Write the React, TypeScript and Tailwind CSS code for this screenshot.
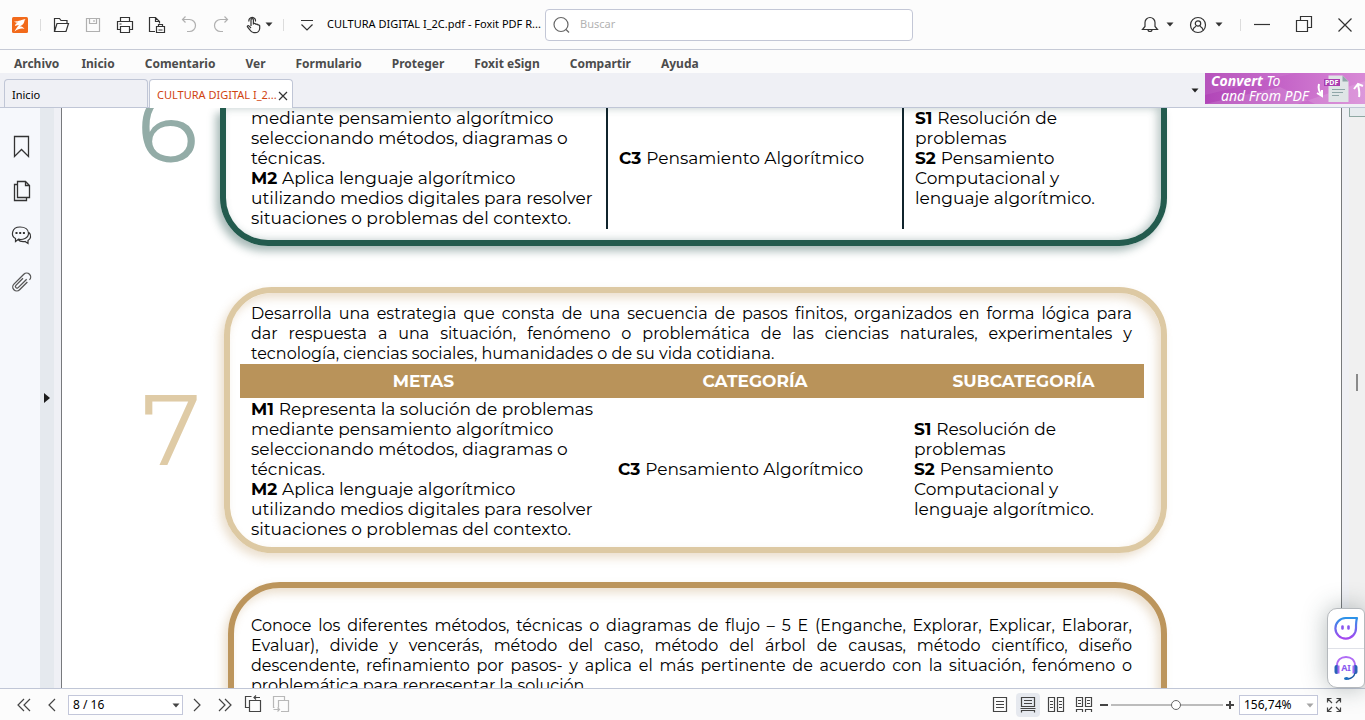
import type { ReactNode } from 'react';

const menus = ['Inicio', 'Comentario', 'Ver', 'Formulario', 'Proteger', 'Foxit eSign', 'Compartir', 'Ayuda'];

const metas = [
  { code: 'M1', text: 'Representa la solución de problemas' },
  { text: 'mediante pensamiento algorítmico' },
  { text: 'seleccionando métodos, diagramas o' },
  { text: 'técnicas.' },
  { code: 'M2', text: 'Aplica lenguaje algorítmico' },
  { text: 'utilizando medios digitales para resolver' },
  { text: 'situaciones o problemas del contexto.' },
];

const categorias = [{ code: 'C3', text: 'Pensamiento Algorítmico' }];

const subcategorias = [
  { code: 'S1', text: 'Resolución de' },
  { text: 'problemas' },
  { code: 'S2', text: 'Pensamiento' },
  { text: 'Computacional y' },
  { text: 'lenguaje algorítmico.' },
];

type Line = { code?: string; text: string };

function Icon({ size = 20, children, className = '' }: { size?: number; children: ReactNode; className?: string }) {
  return (
    <svg
      width={size}
      height={size}
      viewBox={`0 0 ${size} ${size}`}
      fill="none"
      stroke="currentColor"
      strokeWidth="1.2"
      className={`shrink-0 ${className}`}
      aria-hidden="true"
    >
      {children}
    </svg>
  );
}

function ToolButton({ label, className = 'w-8', children }: { label: string; className?: string; children: ReactNode }) {
  return (
    <button type="button" aria-label={label} className={`flex h-8 shrink-0 items-center justify-center ${className}`}>
      {children}
    </button>
  );
}

function Caret({ className = '' }: { className?: string }) {
  return (
    <svg width="8" height="5" viewBox="0 0 8 5" className={`shrink-0 ${className}`} aria-hidden="true">
      <path d="M0.5 0.5h7L4 4.5z" fill="currentColor" />
    </svg>
  );
}

function TitleBar() {
  return (
    <header className="flex h-[50px] shrink-0 items-center border-b border-[#c6cad6] bg-[#fcfcfc] text-[#333]">
      <svg width="16" height="16" viewBox="0 0 16 16" className="ml-3 shrink-0" aria-hidden="true">
        <rect width="16" height="16" rx="1.5" fill="#f26a1b" />
        <path d="M2 4.500c3 .2 5-.8 11.500-2.500C12 4 12.500 5 11.500 6.500 10.500 8 9 8.500 8 9.500c2 0 3 .5 4.500 2.500C9 11 7 11.500 2.500 14.500 4 11.500 5.500 9.500 7 8 5 8.500 4 8.500 3 9c0-1.500 1-2.500 3-3.200C4.500 5.800 3 5.500 2 4.500z" fill="#fff" />
      </svg>
      <span className="mr-1 ml-3 h-3 w-px bg-[#dcdcdc]" />
      <ToolButton label="Abrir">
        <Icon>
          <path d="M3.500 16.500V3.500h5l1.500 2h6v3M3.500 16.500h11.500l2.500-8H6z" />
        </Icon>
      </ToolButton>
      <ToolButton label="Guardar" className="w-8 text-[#b0b0b0]">
        <Icon>
          <path d="M3.500 3.500h13v13h-13zM6.500 3.500v5h7v-5M11 5v2" />
        </Icon>
      </ToolButton>
      <ToolButton label="Imprimir">
        <Icon>
          <path d="M5.500 6.500v-4h9v4M5.500 14.500h-3v-8h15v8h-3M5.500 11.500h9v6h-9zM4.500 9h2" />
        </Icon>
      </ToolButton>
      <ToolButton label="Vista previa">
        <Icon>
          <path d="M8 16.500H2.500v-14h6l4 4v2M8.500 2.500v4h4M11.500 11.500v-2h4v2M9.500 11.500h8v6h-8zM11.500 15h4" />
        </Icon>
      </ToolButton>
      <ToolButton label="Deshacer" className="w-8 text-[#b0b0b0]">
        <Icon>
          <path d="M3.500 4.500h7a6 6 0 0 1 0 12H8M6.500 1.500l-3 3 3 3" />
        </Icon>
      </ToolButton>
      <ToolButton label="Rehacer" className="w-8 text-[#b0b0b0]">
        <Icon>
          <path d="M16.500 4.500h-7a6 6 0 0 0 0 12H12M13.500 1.500l3 3-3 3" />
        </Icon>
      </ToolButton>
      <ToolButton label="Herramienta mano" className="w-8">
        <Icon>
          <path d="M8 11V4.800a1.200 1.200 0 0 1 2.400 0V9.500M10.400 9a1.200 1.200 0 0 1 2.200 0M12.600 9.800a1.200 1.200 0 0 1 2.200 0M14.800 10.500a1 1 0 0 1 1.900.5v2.500a4.500 4.500 0 0 1-4.500 4.200h-1.500c-2 0-2.700-1-3.700-2.700L4.500 12c-.6-1.200.9-1.900 1.700-.9L8 13M6 6.500a3.300 3.300 0 1 1 6.400 0" />
        </Icon>
      </ToolButton>
      <button type="button" aria-label="Más herramientas" className="-ml-1 flex h-8 w-2 items-center">
        <Caret />
      </button>
      <span className="mr-[7px] ml-[10px] h-3 w-px bg-[#dcdcdc]" />
      <ToolButton label="Personalizar barra">
        <Icon>
          <path d="M4 5.500h12M4.500 9.500l5.500 5.500 5.500-5.500" />
        </Icon>
      </ToolButton>
      <h1 className="w-[222px] shrink-0 pl-1 text-[11px] whitespace-nowrap text-black">CULTURA DIGITAL I_2C.pdf - Foxit PDF R...</h1>
      <label className="flex h-8 w-[368px] items-center rounded border border-[#c3c7d6] bg-white px-[5px]">
        <Icon className="text-[#666]">
          <circle cx="10" cy="9.500" r="7" />
          <path d="M15 14.500l3 3" />
        </Icon>
        <input
          type="search"
          aria-label="Buscar"
          placeholder="Buscar"
          className="ml-[9px] min-w-0 flex-1 bg-transparent text-[11px] outline-none placeholder:text-[#b3b3b3]"
        />
      </label>
      <div className="ml-auto flex items-center">
        <ToolButton label="Notificaciones">
          <Icon>
            <path d="M2.500 14.500h15l-2.500-3V7.500a5 5 0 0 0-10 0v4zM8 14.500a2 2 0 0 0 4 0" />
          </Icon>
        </ToolButton>
        <Caret className="mr-2" />
        <ToolButton label="Cuenta">
          <Icon>
            <circle cx="10" cy="10" r="7.500" />
            <circle cx="10" cy="8.500" r="2.700" />
            <path d="M4.800 15.200c.5-2 1.700-3.200 3.200-4M15.200 15.200c-.5-2-1.700-3.200-3.200-4" />
          </Icon>
        </ToolButton>
        <Caret className="mr-[17px] ml-px" />
        <span className="h-3 w-px bg-[#dcdcdc]" />
        <ToolButton label="Minimizar" className="w-[42px]">
          <Icon>
            <path d="M2 9.500h16" />
          </Icon>
        </ToolButton>
        <ToolButton label="Restaurar" className="w-[42px]">
          <Icon>
            <path d="M2.500 5.500h11v11h-11zM6.500 5.500v-4h11v11h-4" />
          </Icon>
        </ToolButton>
        <ToolButton label="Cerrar" className="w-10">
          <Icon>
            <path d="M3.500 3.500l13 13M16.500 3.500l-13 13" />
          </Icon>
        </ToolButton>
      </div>
    </header>
  );
}

function Banner() {
  return (
    <a
      href="#convert"
      className="relative block h-[31px] w-40 bg-linear-to-r from-[#b146b8] via-[#c565c8] to-[#d88ad6] text-[14px] leading-[15px] text-white italic"
    >
      <svg viewBox="0 0 160 31" className="absolute inset-0 h-full w-full" aria-hidden="true">
        <path d="M0 31L75 14 110 31zM160 8L92 31H160z" fill="#fff" opacity=".12" />
        <path d="M0 0h90L0 22z" fill="#fff" opacity=".07" />
        <path d="M123.500 2.500h14l6 6V29h-20z" fill="#dfe5e6" />
        <path d="M137.500 2.500l6 6h-6z" fill="#8fa6a8" />
        <path d="M127 16.500h13M127 19.500h11M127 22.500h7" stroke="#8fa6a8" />
        <rect x="119" y="6" width="16" height="7" fill="#a93cb0" />
        <path d="M114 11c-1 4 0 8 3 11M112 20l5 3 0-6" stroke="#fff" strokeWidth="2" fill="none" />
        <path d="M154 24c1-4 0-8-1-12M149 16l4-5 5 2" stroke="#fff" strokeWidth="2" fill="none" />
      </svg>
      <span className="relative block pl-[6px]">
        <b>Convert</b> To
      </span>
      <span className="relative block pl-4">and From PDF</span>
      <span className="absolute top-[5px] left-[120px] text-[7px] leading-[9px] font-bold not-italic">PDF</span>
    </a>
  );
}

function TabBar() {
  return (
    <div className="flex h-[35px] shrink-0 items-end border-b border-[#c0c6d6] bg-[#eff0f5] pl-1 text-[11px]">
      <button type="button" className="h-7 w-36 rounded-t border border-b-0 border-[#c0c6d6] pt-1 pl-[7px] text-left text-black">
        Inicio
      </button>
      <div className="relative -mb-px ml-px flex h-[29px] w-36 items-center justify-between rounded-t border border-b-0 border-[#c0c6d6] bg-white pt-[3px] pr-1 pl-[7px] text-[#d04410]">
        <button type="button" className="whitespace-nowrap">CULTURA DIGITAL I_2...</button>
        <button type="button" aria-label="Cerrar pestaña" className="text-[#333]">
          <Icon size={10}>
            <path d="M1 1l8 8M9 1L1 9" />
          </Icon>
        </button>
      </div>
      <div className="ml-auto flex items-center self-start">
        <button type="button" aria-label="Lista de pestañas" className="mr-[6px] pt-1 text-[#222]">
          <Caret />
        </button>
        <Banner />
      </div>
    </div>
  );
}

function SideBar() {
  return (
    <nav className="flex w-10 shrink-0 flex-col items-center bg-[#f6f8fc] pt-[17px] pl-px text-[#333]">
      <button type="button" aria-label="Marcadores" className="flex h-11 items-center">
        <Icon size={24}>
          <path d="M5.500 1.500h14v20l-7-7-7 7z" strokeWidth="1.3" />
        </Icon>
      </button>
      <button type="button" aria-label="Páginas" className="flex h-11 items-center">
        <Icon size={24}>
          <path d="M8.500 2.500h8l4 4v12h-12zM16.500 2.500v4h4M8.500 5.500h-3v16h12v-3" strokeWidth="1.3" />
        </Icon>
      </button>
      <button type="button" aria-label="Comentarios" className="flex h-11 items-center">
        <Icon size={24}>
          <path d="M6.500 15.500C1.500 13 2.500 4 11 4c5 0 8.500 2.500 8.500 6.200 0 5-6 7-10 6l-3 2.300zM20 9.500c3 3 1.500 6.500-1 8v3l-3-2c-3 .5-5.500-.2-7-2" />
          <path d="M6.500 10h2M10.200 10h2M13.900 10h2" strokeWidth="2" />
        </Icon>
      </button>
      <button type="button" aria-label="Archivos adjuntos" className="mt-[3px] flex h-11 items-center text-[#555]">
        <Icon size={24}>
          <path
            d="M16.500 7.500v11a4 4 0 0 1-8 0V4.500a4 4 0 0 1 8 0M8.500 10V4.500M14 6v12a1.600 1.600 0 0 1-3.200 0V8"
            strokeWidth="1.3"
            transform="rotate(45 12 12)"
          />
        </Icon>
      </button>
    </nav>
  );
}

function Lines({ lines }: { lines: Line[] }) {
  return (
    <>
      {lines.map((line) => (
        <div key={line.text} className="whitespace-nowrap">
          {line.code && <b>{line.code} </b>}
          {line.text}
        </div>
      ))}
    </>
  );
}

function GoalsTable({ header = false, ruled = false }: { header?: boolean; ruled?: boolean }) {
  const rule = ruled ? 'border-l-2 border-[#10242c]' : '';
  return (
    <table className="w-full table-fixed border-collapse text-[17px]">
      <colgroup>
        <col />
        <col className="w-[296px]" />
        <col className="w-[241px]" />
      </colgroup>
      {header && (
        <thead>
          <tr className="h-[34px] bg-[#b9935a] text-white">
            <th className="font-bold">METAS</th>
            <th className="font-bold">CATEGORÍA</th>
            <th className="font-bold">SUBCATEGORÍA</th>
          </tr>
        </thead>
      )}
      <tbody>
        <tr className="h-[142px]">
          <td className="px-[11px]">
            <Lines lines={metas} />
          </td>
          <td className={`px-[11px] ${rule}`}>
            <Lines lines={categorias} />
          </td>
          <td className={`px-[11px] ${rule}`}>
            <Lines lines={subcategorias} />
          </td>
        </tr>
      </tbody>
    </table>
  );
}

function Paragraph({ lines, last, className = '' }: { lines: string[]; last: string; className?: string }) {
  return (
    <div className={`text-[16px] ${className}`}>
      {lines.map((line) => (
        <p key={line} className="whitespace-nowrap [text-align-last:justify]">
          {line}
        </p>
      ))}
      <p>{last}</p>
    </div>
  );
}

function Document() {
  return (
    <main className="min-w-0 flex-1 overflow-hidden border-x border-[#77797d] bg-white pr-[174px] font-['Montserrat','Inter',sans-serif] leading-5 text-black">
      <section className="flex">
        <div className="-mt-8 w-[158px] shrink-0 pl-[75px] text-[100px] leading-[100px] text-[#93aca7]">6</div>
        <div className="flex h-[138px] min-w-0 flex-1 flex-col justify-end rounded-b-[48px] border-6 border-t-0 border-[#235b4e] pr-[17px] pb-[11px] pl-[14px] shadow-[-4px_5px_9px_rgba(35,80,75,0.4),inset_-4px_0_9px_rgba(35,80,75,0.3)]">
          <GoalsTable ruled />
        </div>
      </section>

      <section className="mt-[41px] flex">
        <div className="flex w-[162px] shrink-0 items-center pt-[18px] pl-20 text-[100px] leading-[100px] text-[#dfcba6]">7</div>
        <div className="h-[266px] min-w-0 flex-1 rounded-[48px] border-6 border-[#ddc9a3] pt-[11px] pr-[17px] pl-[10px] shadow-[-4px_5px_10px_rgba(188,149,92,0.3),inset_-4px_5px_10px_rgba(188,149,92,0.3)]">
          <Paragraph
            className="pr-3 pl-[11px]"
            lines={[
              'Desarrolla una estrategia que consta de una secuencia de pasos finitos, organizados en forma lógica para',
              'dar respuesta a una situación, fenómeno o problemática de las ciencias naturales, experimentales y',
            ]}
            last="tecnología, ciencias sociales, humanidades o de su vida cotidiana."
          />
          <GoalsTable header />
        </div>
      </section>

      <section className="mt-[29px] flex pl-[166px]">
        <div className="h-[266px] min-w-0 flex-1 rounded-[52px] border-6 border-[#bc955c] pt-[28px] pr-[29px] pl-[17px] shadow-[-4px_5px_10px_rgba(188,149,92,0.3),inset_-4px_5px_10px_rgba(188,149,92,0.3)]">
          <Paragraph
            lines={[
              'Conoce los diferentes métodos, técnicas o diagramas de flujo – 5 E (Enganche, Explorar, Explicar, Elaborar,',
              'Evaluar), divide y vencerás, método del caso, método del árbol de causas, método científico, diseño',
              'descendente, refinamiento por pasos- y aplica el más pertinente de acuerdo con la situación, fenómeno o',
            ]}
            last="problemática para representar la solución."
          />
        </div>
      </section>
    </main>
  );
}

function Assistant() {
  return (
    <aside className="absolute right-0 bottom-0 flex h-20 w-[38px] flex-col rounded-l-[10px] rounded-r-[6px] border border-[#b5b9bd] bg-white shadow-[0_0_24px_rgba(40,60,60,0.35)]">
      <button type="button" aria-label="Chat" className="flex flex-1 items-center justify-center border-b border-[#dfe1e8]">
        <svg width="26" height="26" viewBox="0 0 26 26" fill="none" aria-hidden="true">
          <defs>
            <linearGradient id="chat" x1="0" y1="0" x2="0" y2="1">
              <stop stopColor="#2c93e8" />
              <stop offset="1" stopColor="#a646f0" />
            </linearGradient>
          </defs>
          <path d="M12.500 3H24c-1 3-1 5-1 10a10.300 10.300 0 1 1-10.500-10z" stroke="url(#chat)" strokeWidth="2.200" strokeLinejoin="round" />
          <path d="M9.500 11.500v2M15.500 11.500v2" stroke="#8a55f0" strokeWidth="2.600" strokeLinecap="round" />
        </svg>
      </button>
      <button type="button" aria-label="Asistente AI" className="relative flex flex-1 items-center justify-center">
        <svg width="26" height="26" viewBox="0 0 26 26" fill="none" aria-hidden="true">
          <path d="M4 11C4 5 8 2 13 2s9 3 9 9" stroke="#b06cf5" strokeWidth="2" />
          <path d="M3.500 12v5M22.500 12v5" stroke="#2a62b8" strokeWidth="4" strokeLinecap="round" />
          <path d="M5.500 10.500v8M20.500 10.500v8" stroke="#a36bf5" strokeWidth="2" />
          <path d="M22 18c-1 4-4 5.500-7 6" stroke="#1d5aa6" strokeWidth="1.300" />
          <ellipse cx="13.500" cy="23.500" rx="2.500" ry="1.500" fill="#1d6fc0" />
        </svg>
        <span className="absolute text-[9px] leading-[12px] font-bold text-[#8a5cf0]">AI</span>
      </button>
    </aside>
  );
}

function StatusBar() {
  return (
    <footer className="flex h-8 shrink-0 items-center border-t border-[#c0c6d6] bg-[#fcfcfc] pr-[17px] pl-[10px] text-[12px] text-[#444]">
      <ToolButton label="Primera página" className="w-7">
        <Icon>
          <path d="M10 4l-6 6 6 6M16 4l-6 6 6 6" />
        </Icon>
      </ToolButton>
      <ToolButton label="Página anterior" className="mr-[2px] w-7">
        <Icon>
          <path d="M13 4l-6 6 6 6" />
        </Icon>
      </ToolButton>
      <div className="relative">
        <select aria-label="Página" className="block h-5 w-[115px] appearance-none border border-[#c3c7da] bg-white pl-1 text-black">
          <option>8 / 16</option>
        </select>
        <Caret className="pointer-events-none absolute top-2 right-[3px]" />
      </div>
      <ToolButton label="Página siguiente" className="w-7">
        <Icon>
          <path d="M7 4l6 6-6 6" />
        </Icon>
      </ToolButton>
      <ToolButton label="Última página" className="w-7">
        <Icon>
          <path d="M4 4l6 6-6 6M10 4l6 6-6 6" />
        </Icon>
      </ToolButton>
      <ToolButton label="Vista anterior" className="w-7">
        <Icon>
          <path d="M6.500 5.500h11v11h-11zM6.500 12.500h-4v-11h6M17 2.500h-6M13 0.500l-2 2 2 2" />
        </Icon>
      </ToolButton>
      <ToolButton label="Vista siguiente" className="w-7 text-[#b8b8b8]">
        <Icon>
          <path d="M13.500 5.500v-4h-11v11h1M7.500 12.500V5.500h10v11H10M2.500 14.500h6M6.500 12.500l2 2-2 2" />
        </Icon>
      </ToolButton>

      <div className="ml-auto flex items-center">
        <ToolButton label="Una página" className="w-7">
          <Icon>
            <path d="M3.500 2.500h13v14h-13zM6 6.500h8M6 9.500h8M6 12.500h8" />
          </Icon>
        </ToolButton>
        <button type="button" aria-label="Continua" className="mx-[2px] flex h-6 w-6 items-center justify-center rounded bg-[#e6e9ef]">
          <Icon>
            <path d="M3.500 2.500h13v9h-13zM6 5.500h8M6 8.500h8M2.500 13.500h15M3.500 17.500v-2h13v2" />
          </Icon>
        </button>
        <ToolButton label="Páginas opuestas" className="w-7">
          <Icon>
            <path d="M2.500 2.500h6v14h-6zM11.500 2.500h6v14h-6zM4 6.500h3M4 9.500h3M4 12.500h3M13 6.500h3M13 9.500h3M13 12.500h3" />
          </Icon>
        </ToolButton>
        <ToolButton label="Opuestas continuas" className="w-7">
          <Icon>
            <path d="M2.500 2.500h6v9h-6zM11.500 2.500h6v9h-6zM4 5.500h3M4 8.500h3M13 5.500h3M13 8.500h3M2.500 17v-2.500h6V17M11.500 17v-2.500h6V17" />
          </Icon>
        </ToolButton>
        <ToolButton label="Reducir" className="w-3">
          <Icon size={10}>
            <path d="M1 5h8" strokeWidth="2" />
          </Icon>
        </ToolButton>
        <input
          type="range"
          aria-label="Zoom"
          defaultValue={59}
          className="mx-px h-3 w-28 appearance-none bg-transparent [&::-webkit-slider-runnable-track]:h-[2px] [&::-webkit-slider-runnable-track]:bg-[#bcbcbc] [&::-webkit-slider-thumb]:-mt-1 [&::-webkit-slider-thumb]:h-[10px] [&::-webkit-slider-thumb]:w-[10px] [&::-webkit-slider-thumb]:appearance-none [&::-webkit-slider-thumb]:rounded-full [&::-webkit-slider-thumb]:border [&::-webkit-slider-thumb]:border-[#666] [&::-webkit-slider-thumb]:bg-white"
        />
        <ToolButton label="Ampliar" className="mr-[3px] w-3">
          <Icon size={10}>
            <path d="M1 5h8M5 1v8" strokeWidth="2" />
          </Icon>
        </ToolButton>
        <div className="relative mr-[2px]">
          <select aria-label="Nivel de zoom" className="block h-5 w-[79px] appearance-none border border-[#c3c7da] bg-white pl-1 text-black">
            <option>156,74%</option>
          </select>
          <Caret className="pointer-events-none absolute top-2 right-1 text-[#a5a5a5]" />
        </div>
        <ToolButton label="Pantalla completa" className="w-7">
          <Icon>
            <path d="M3.500 7.500v-4h4M3.500 3.500L8 8M12.500 3.500h4v4M16.500 3.500L12 8M3.500 12.500v4h4M3.500 16.500L8 12M16.500 12.500v4h-4M16.500 16.500L12 12" />
          </Icon>
        </ToolButton>
      </div>
    </footer>
  );
}

export default function App() {
  return (
    <div className="flex h-screen flex-col overflow-hidden bg-[#eff0f5] font-['Noto_Sans','Open_Sans',sans-serif]">
      <TitleBar />
      <nav className="flex h-[23px] shrink-0 items-center bg-[#fcfcfc] pt-1 pl-[14px] text-[12px] font-bold text-[#4c4c4c]">
        <button type="button" className="mr-[22px]">Archivo</button>
        <div className="flex gap-[30px]">
          {menus.map((menu) => (
            <button type="button" key={menu} className="whitespace-nowrap">
              {menu}
            </button>
          ))}
        </div>
      </nav>
      <TabBar />
      <div className="relative flex min-h-0 flex-1">
        <SideBar />
        <div className="mr-[7px] flex w-[14px] shrink-0 items-center justify-center bg-[#e5e9ee]">
          <button type="button" aria-label="Mostrar panel">
            <svg width="6" height="10" viewBox="0 0 6 10" aria-hidden="true">
              <path d="M0 0l6 5-6 5z" fill="#1c1c1c" />
            </svg>
          </button>
        </div>
        <Document />
        <div className="ml-[7px] flex w-4 shrink-0 flex-col items-center bg-[#f0f0f0]">
          <div className="h-[9px] w-full border border-t-0 border-r-0 border-[#8fa8a3] bg-[#e6ebee]" />
          <div className="mt-[257px] h-[17px] w-[2px] bg-[#8a8a8a]" />
        </div>
        <Assistant />
      </div>
      <StatusBar />
    </div>
  );
}
